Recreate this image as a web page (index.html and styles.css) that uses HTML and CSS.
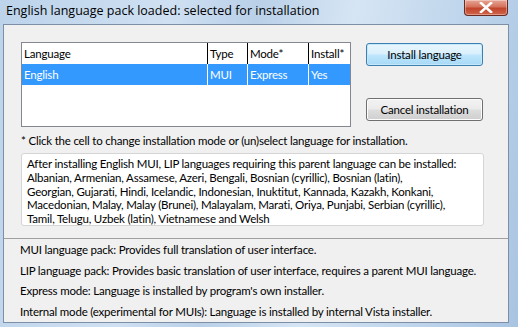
FILE: index.html
```html
<!DOCTYPE html>
<html>
<head>
<meta charset="utf-8">
<link rel="stylesheet" href="styles.css">
</head>
<body>
<div class="frame">
  <div class="titlebar">
    <div class="title">English language pack loaded: selected for installation</div>
    <div class="close">
      <svg width="14" height="11" viewBox="0 0 14 11"><path d="M2 1 L12 10 M12 1 L2 10" stroke="#fff" stroke-width="2.6" stroke-linecap="square"/></svg>
    </div>
  </div>
  <div class="client">
    <div class="top">
      <div class="list">
        <div class="row head">
          <div class="c c1">Language</div>
          <div class="c c2">Type</div>
          <div class="c c3">Mode*</div>
          <div class="c c4">Install*</div>
        </div>
        <div class="row sel">
          <div class="c c1">English</div>
          <div class="c c2">MUI</div>
          <div class="c c3">Express</div>
          <div class="c c4">Yes</div>
        </div>
      </div>
      <div class="buttons">
        <div class="btn focus">Install language</div>
        <div class="btn">Cancel installation</div>
      </div>
    </div>
    <div class="note">* Click the cell to change installation mode or (un)select language for installation.</div>
    <div class="box">After installing English MUI, LIP languages requiring this parent language can be installed:<br>Albanian, Armenian, Assamese, Azeri, Bengali, Bosnian (cyrillic), Bosnian (latin),<br>Georgian, Gujarati, Hindi, Icelandic, Indonesian, Inuktitut, Kannada, Kazakh, Konkani,<br>Macedonian, Malay, Malay (Brunei), Malayalam, Marati, Oriya, Punjabi, Serbian (cyrillic),<br>Tamil, Telugu, Uzbek (latin), Vietnamese and Welsh</div>
    <div class="legend">
      <div>MUI language pack: Provides full translation of user interface.</div>
      <div>LIP language pack: Provides basic translation of user interface, requires a parent MUI language.</div>
      <div>Express mode: Language is installed by program's own installer.</div>
      <div>Internal mode (experimental for MUIs): Language is installed by internal Vista installer.</div>
    </div>
  </div>
</div>
</body>
</html>
```
FILE: styles.css
```css
html, body { margin: 0; padding: 0; }
body {
  width: 518px; height: 327px; overflow: hidden;
  font-family: "Lato", "Open Sans", sans-serif;
  color: #000;
}
.frame {
  width: 518px; height: 327px;
  background: linear-gradient(100deg, #bcd3ea 0%, #cfe0f2 30%, #b9d0e8 45%, #d6e5f4 62%, #c0d6ec 80%, #a9c4e2 100%);
  display: flex; flex-direction: column;
}
.titlebar {
  height: 24px; display: flex; align-items: flex-start; justify-content: space-between;
}
.title {
  font-family: "Open Sans", sans-serif;
  font-size: 12.5px; padding: 2px 0 0 6px; line-height: 18px; color: #000;
}
.close {
  width: 42px; height: 15px; margin-right: 10px;
  border: 1px solid #6b2a20; border-top: none;
  border-radius: 0 0 4px 4px;
  background: linear-gradient(#e8a595 0%, #d4735d 45%, #c1442b 55%, #d0664c 100%);
  display: flex; align-items: center; justify-content: center;
  box-shadow: inset 0 0 0 1px rgba(255,255,255,0.35);
}
.client {
  margin: 0 9px 4px 3px;
  flex: 1;
  background: #f0f0f0;
  border: 1px solid #7d8fa6;
  padding: 17px 0 0 17px;
  font-size: 11.5px;
  letter-spacing: -0.2px;
  min-height: 0;
}
.top { display: flex; }
.list {
  width: 328px; height: 83px;
  border: 1px solid #828790;
  background: #fff;
}
.row { display: flex; height: 21px; line-height: 21px; }
.head .c { border-right: 1px solid #000; }
.head .c4 { border-right: none; }
.c { padding-left: 2px; box-sizing: border-box; white-space: nowrap; overflow: hidden; }
.c1 { width: 186px; }
.c2 { width: 40px; }
.c3 { width: 61px; }
.c4 { width: 41px; }
.sel { background: #3399ff; color: #fff; }
.sel .c { border-right: 1px solid #fff; }
.sel .c4 { border-right: none; }
.buttons {
  margin-left: 15px; padding-top: 1px;
  display: flex; flex-direction: column; gap: 32px;
}
.btn {
  width: 115px; height: 21px; line-height: 21px; text-align: center;
  border: 1px solid #707070; border-radius: 3px;
  background: linear-gradient(#f2f2f2 0%, #ebebeb 48%, #dddddd 52%, #cfcfcf 100%);
  box-shadow: inset 0 0 0 1px #fcfcfc;
}
.btn.focus {
  border-color: #3c7fb1;
  background: linear-gradient(#eaf6fd 0%, #d9f0fc 48%, #bee6fd 52%, #a7d9f5 100%);
  box-shadow: inset 0 0 0 1px #c6e8fb;
}
.note { margin-top: 5px; line-height: 18px; white-space: nowrap; }
.box {
  margin-top: 3px; width: 451px; height: 66px;
  background: #fff; border: 1px solid #d5d5d5; border-radius: 3px;
  padding: 3px 5px 2px 5px; line-height: 13.75px;
  white-space: nowrap;
}
.legend {
  margin: 12px 0 0 -17px; border-top: 1px solid #a0a0a0; padding: 1px 0 0 16px;
}
.legend div { line-height: 20.7px; white-space: nowrap; }
```
